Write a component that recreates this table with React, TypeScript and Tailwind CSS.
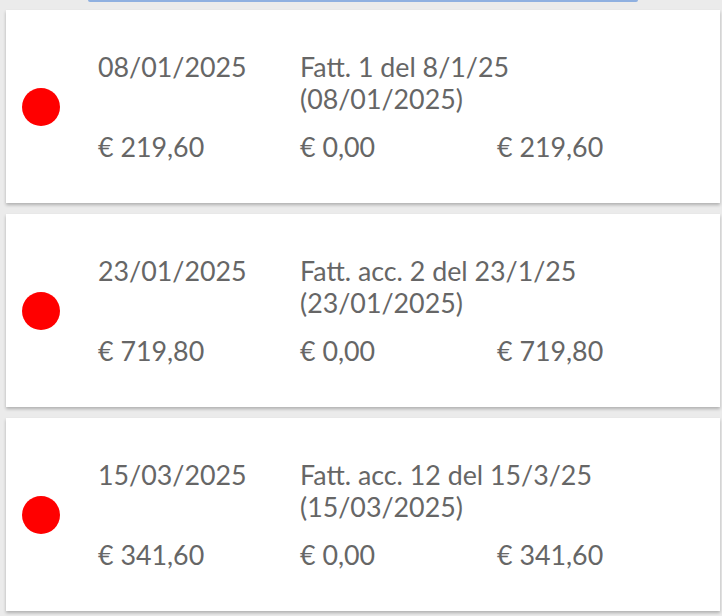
const invoices = [
  {
    date: "08/01/2025",
    title: "Fatt. 1 del 8/1/25",
    ref: "(08/01/2025)",
    total: "€ 219,60",
    paid: "€ 0,00",
    due: "€ 219,60",
  },
  {
    date: "23/01/2025",
    title: "Fatt. acc. 2 del 23/1/25",
    ref: "(23/01/2025)",
    total: "€ 719,80",
    paid: "€ 0,00",
    due: "€ 719,80",
  },
  {
    date: "15/03/2025",
    title: "Fatt. acc. 12 del 15/3/25",
    ref: "(15/03/2025)",
    total: "€ 341,60",
    paid: "€ 0,00",
    due: "€ 341,60",
  },
];

type Invoice = (typeof invoices)[number];

function InvoiceCard({ inv }: { inv: Invoice }) {
  return (
    <div className="flex h-[193px] items-center bg-white pl-4 shadow-[0_2px_3px_rgba(0,0,0,0.25)]">
      {/* status dot */}
      <div className="h-[38px] w-[38px] shrink-0 rounded-full bg-[#ff0000]" />

      <div className="ml-[38px] grid grid-cols-[202px_197px_200px] text-[26.8px] leading-[32px] text-[#666666]">
        <div>{inv.date}</div>
        <div className="col-span-2">
          {inv.title}
          <br />
          {inv.ref}
        </div>
        <div className="mt-4">{inv.total}</div>
        <div className="mt-4">{inv.paid}</div>
        <div className="mt-4">{inv.due}</div>
      </div>
    </div>
  );
}

export default function App() {
  return (
    <div
      className="min-h-[616px] bg-[#ebebeb] pl-[6px] pr-[2px]"
      style={{ fontFamily: "Lato, 'Open Sans', sans-serif" }}
    >
      {/* bottom edge of the search field above */}
      <div className="ml-[82px] mr-[82px] h-[2px] rounded-b-md border-b-2 border-[#8fb0e0]" />

      <div className="mt-[8px] flex flex-col gap-[11px]">
        {invoices.map((inv) => (
          <InvoiceCard key={inv.date} inv={inv} />
        ))}
      </div>
    </div>
  );
}
